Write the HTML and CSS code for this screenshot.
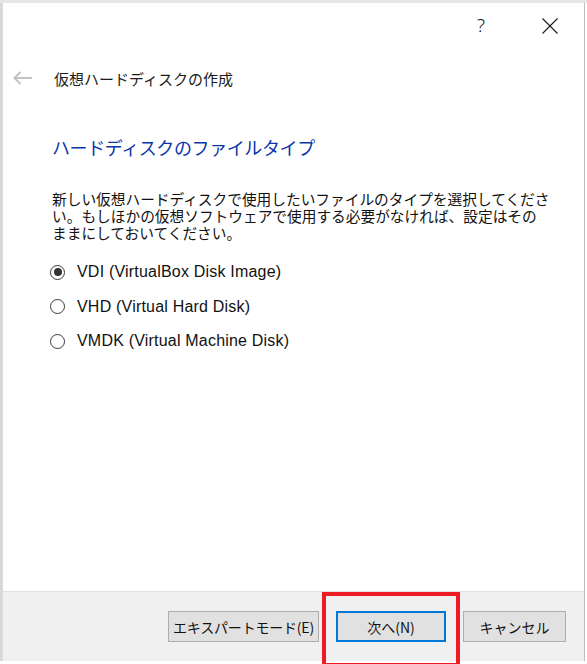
FILE: index.html
```html
<!DOCTYPE html>
<html lang="ja">
<head>
<meta charset="utf-8">
<link rel="stylesheet" href="styles.css">
</head>
<body>
<div class="dialog">
  <div class="titlebar">
    <div class="tb-btn help">?</div>
    <div class="tb-btn close">
      <svg width="16" height="16" viewBox="0 0 16 16"><path d="M0.5 0.5 L15.5 15.5 M15.5 0.5 L0.5 15.5" stroke="#1a1a1a" stroke-width="1.1" fill="none"/></svg>
    </div>
  </div>
  <div class="header">
    <svg class="back" width="20" height="14" viewBox="0 0 20 14"><path d="M1.5 7 H19 M7.5 1 L1.5 7 L7.5 13" stroke="#c2c2c2" stroke-width="2" fill="none"/></svg>
    <span class="wizard-title">仮想ハードディスクの作成</span>
  </div>
  <div class="content">
    <h1 class="heading">ハードディスクのファイルタイプ</h1>
    <p class="desc">新しい仮想ハードディスクで使用したいファイルのタイプを選択してくださ<br>い。もしほかの仮想ソフトウェアで使用する必要がなければ、設定はその<br>ままにしておいてください。</p>
    <div class="options">
      <div class="option"><span class="radio checked"></span><span class="label">VDI (VirtualBox Disk Image)</span></div>
      <div class="option"><span class="radio"></span><span class="label">VHD (Virtual Hard Disk)</span></div>
      <div class="option"><span class="radio"></span><span class="label">VMDK (Virtual Machine Disk)</span></div>
    </div>
  </div>
  <div class="footer">
    <div class="btn expert">エキスパートモード(E)</div>
    <div class="btn next">次へ(N)</div>
    <div class="btn cancel">キャンセル</div>
  </div>
</div>
<div class="highlight"></div>
</body>
</html>
```
FILE: styles.css
```css
html, body {
  margin: 0;
  padding: 0;
}
body {
  width: 587px;
  height: 664px;
  background: #ffffff;
  position: relative;
  overflow: hidden;
  font-family: "Noto Sans CJK JP", "Noto Sans", sans-serif;
  border-top: 3px solid #e6e6e6;
  box-sizing: border-box;
}
.dialog {
  margin-left: 2px;
  width: 581px;
  height: 658px;
  background: #ffffff;
  border-left: 1px solid #dcdcdc;
  border-right: 1px solid #bdbdbd;
  display: flex;
  flex-direction: column;
  box-shadow: -2px 0 0 #d8d8d8;
}
.titlebar {
  height: 45px;
  display: flex;
  justify-content: flex-end;
  align-items: center;
  padding-right: 11px;
  gap: 23px;
}
.tb-btn {
  width: 46px;
  height: 45px;
  display: flex;
  align-items: center;
  justify-content: center;
  color: #1a1a1a;
}
.help {
  font-family: "Noto Sans", sans-serif;
  font-size: 19px;
  font-weight: 300;
  padding-bottom: 2px;
  box-sizing: border-box;
}
.header {
  height: 60px;
  display: flex;
  align-items: center;
  padding-left: 10px;
}
.back {
  margin-right: 21px;
}
.wizard-title {
  font-size: 15px;
  color: #1b1b1b;
}
.content {
  padding-left: 49px;
  padding-top: 25px;
}
.heading {
  margin: 0;
  font-size: 18px;
  font-weight: 400;
  color: #0a36a8;
  line-height: 28px;
  letter-spacing: -0.4px;
}
.desc {
  margin: 29px 0 0 0;
  font-size: 14.7px;
  line-height: 17px;
  color: #111;
  white-space: nowrap;
}
.options {
  margin-top: 14px;
  display: flex;
  flex-direction: column;
}
.option {
  height: 34.5px;
  display: flex;
  align-items: center;
}
.radio {
  flex: 0 0 auto;
  width: 15px;
  height: 15px;
  border: 1px solid #3a3a3a;
  border-radius: 50%;
  box-sizing: border-box;
  margin-right: 12px;
  margin-left: -2px;
  display: flex;
  align-items: center;
  justify-content: center;
  background: #fff;
}
.radio.checked::after {
  content: "";
  width: 8px;
  height: 8px;
  border-radius: 50%;
  background: #333;
}
.label {
  font-family: "Liberation Sans", "Noto Sans CJK JP", sans-serif;
  font-size: 16px;
  color: #111;
  letter-spacing: 0.2px;
}
.footer {
  margin-top: auto;
  background: #f0f0f0;
  border-top: 1px solid #dfdfdf;
  display: flex;
  justify-content: flex-end;
  align-items: flex-start;
  padding: 19px 18px 0 0;
  gap: 17px;
  box-sizing: border-box;
  height: 70px;
}
.btn {
  height: 31px;
  box-sizing: border-box;
  background: #e1e1e1;
  border: 1px solid #adadad;
  display: flex;
  align-items: center;
  justify-content: center;
  font-size: 14px;
  color: #111;
  white-space: nowrap;
}
.expert { width: 151px; letter-spacing: -0.2px; }
.next { width: 110px; border: 2px solid #0078d7; }
.cancel { width: 103px; }
.highlight {
  position: absolute;
  left: 322px;
  top: 589px;
  width: 138px;
  height: 75px;
  border: 4px solid #ed1c24;
  box-sizing: border-box;
}
```
